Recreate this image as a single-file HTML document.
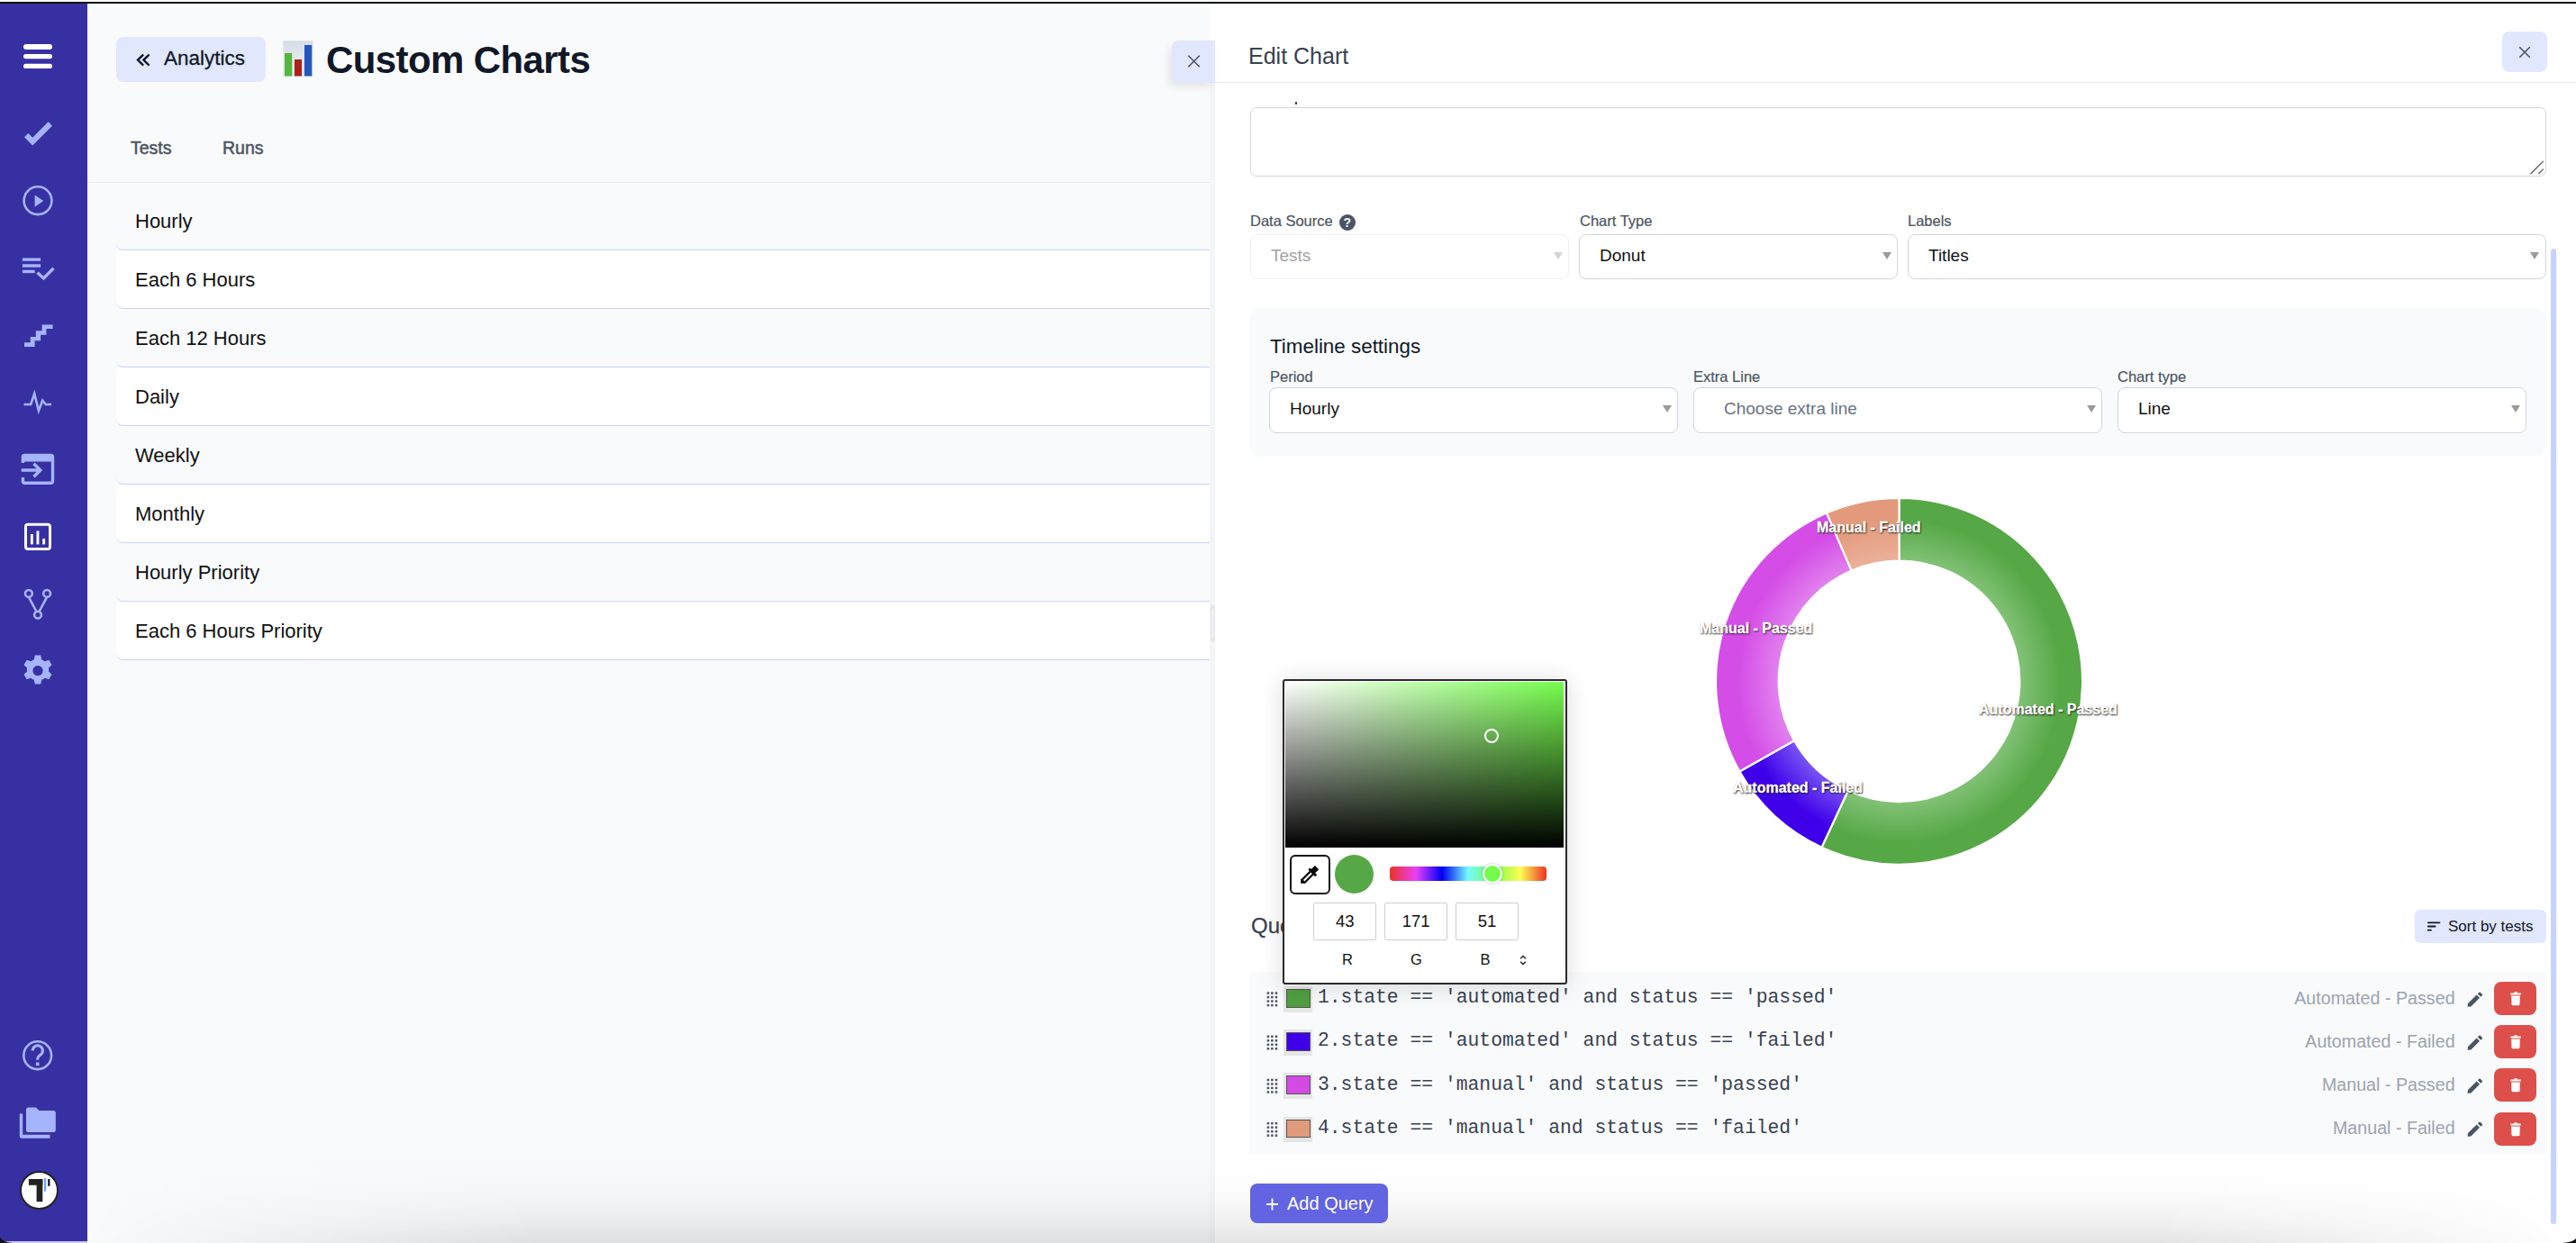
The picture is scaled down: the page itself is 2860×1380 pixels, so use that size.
<!DOCTYPE html>
<html><head><meta charset="utf-8">
<style>
*{box-sizing:border-box;margin:0;padding:0}
html,body{width:2860px;height:1380px;overflow:hidden;background:#fff;font-family:"Liberation Sans",sans-serif}
.a{position:absolute}
.t{position:absolute;white-space:nowrap;line-height:1}
#topbar{left:0;top:2px;width:2860px;height:2px;background:#111}
#side{left:0;top:4px;width:97px;height:1376px;background:#3730a3}
#main{left:97px;top:4px;width:1246px;height:1376px;background:#f9fafb}
.item{position:absolute;left:129px;width:1214px;height:65px;border-bottom:1px solid #c7d2fe;border-radius:8px 0 0 8px}
.item span{position:absolute;left:21px;font-size:22px;line-height:1;color:#111;top:22px}
.lbl{position:absolute;font-size:16.5px;line-height:1;color:#4b5563;white-space:nowrap;-webkit-text-stroke:0.2px #4b5563}
.sel{position:absolute;height:50px;border:1px solid #d1d5db;border-radius:8px;background:#fff}
.sel span{position:absolute;left:22px;top:12.5px;font-size:19px;line-height:1;color:#111;white-space:nowrap}
.arr{position:absolute;width:0;height:0;border-left:5px solid transparent;border-right:5px solid transparent;border-top:8px solid #9a9a9a}
.dl{font-size:16px;font-weight:bold;color:#fff;text-shadow:0.5px 0.5px 1.5px rgba(0,0,0,.75),1px 1px 2px rgba(0,0,0,.5);-webkit-text-stroke:0.3px #fff}
.mono{font-family:"Liberation Mono",monospace;font-size:21.35px;color:#374151}
.ql{font-size:19.7px;color:#9ca3af}
.pin{top:1002.4px;width:69.6px;height:41.8px;border:1px solid #cfcfcf;border-radius:2px;background:#fff}
.pin span{position:absolute;left:0;right:0;top:10.5px;text-align:center;font-size:18.5px;line-height:1;color:#111}
.pl{top:1057px;width:40px;text-align:center;font-size:16.5px;color:#111}
</style></head><body>
<div class="a" id="topbar"></div>
<div class="a" id="side"></div>
<div class="a" id="main"></div>

<!-- left header -->
<div class="a" style="left:129px;top:41px;width:166px;height:50px;background:#e0e7ff;border-radius:8px"></div>
<div class="t" style="left:182px;top:54px;font-size:22.5px;color:#111827;-webkit-text-stroke:0.3px #111827">Analytics</div>
<div class="t" style="left:362px;top:46px;font-size:42px;font-weight:bold;color:#111827;letter-spacing:-0.6px">Custom Charts</div>
<div class="t" style="left:145px;top:155px;font-size:19.5px;color:#4b5563;-webkit-text-stroke:0.5px #4b5563">Tests</div>
<div class="t" style="left:247px;top:155px;font-size:19.5px;color:#4b5563;-webkit-text-stroke:0.5px #4b5563">Runs</div>
<div class="a" style="left:97px;top:202px;width:1246px;height:1px;background:#e5e7eb"></div>

<!-- list -->
<div class="item" style="top:213px;background:#f9fafb"><span>Hourly</span></div>
<div class="item" style="top:278px;background:#fff"><span>Each 6 Hours</span></div>
<div class="item" style="top:343px;background:#f9fafb"><span>Each 12 Hours</span></div>
<div class="item" style="top:408px;background:#fff"><span>Daily</span></div>
<div class="item" style="top:473px;background:#f9fafb"><span>Weekly</span></div>
<div class="item" style="top:538px;background:#fff"><span>Monthly</span></div>
<div class="item" style="top:603px;background:#f9fafb"><span>Hourly Priority</span></div>
<div class="item" style="top:668px;background:#fff"><span>Each 6 Hours Priority</span></div>

<!-- right panel -->
<div class="a" style="left:1343px;top:4px;width:1517px;height:87px;background:#fff"></div>
<div class="a" style="left:1343px;top:91px;width:6px;height:1289px;background:#f4f5f6"></div>
<div class="a" style="left:1349px;top:91px;width:1511px;height:1289px;background:#fff"></div>
<div class="a" style="left:1343px;top:91px;width:1517px;height:1px;background:#e5e7eb"></div>
<!-- bottom shadow -->
<div class="a" style="left:97px;top:1290px;width:2763px;height:90px;pointer-events:none;background:linear-gradient(to bottom,rgba(0,0,0,0),rgba(0,0,0,0.012) 35%,rgba(0,0,0,0.05) 70%,rgba(0,0,0,0.105));-webkit-mask-image:linear-gradient(to right,transparent 0,#000 500px,#000 2300px,transparent 2763px)"></div>

<div class="a" style="left:1301px;top:45px;width:48px;height:46px;background:#e0e7ff;border-radius:8px 0 0 8px;box-shadow:-4px 6px 10px rgba(0,0,0,0.08)"></div>
<div class="t" style="left:1386px;top:50px;font-size:25px;color:#374151">Edit Chart</div>
<div class="a" style="left:2778px;top:35px;width:50px;height:45px;background:#e0e7ff;border-radius:8px"></div>

<div class="a" style="left:1388px;top:119px;width:1439px;height:77px;border:1px solid #d1d5db;border-radius:7px"></div>

<div class="lbl" style="left:1388px;top:237px">Data Source</div>
<div class="lbl" style="left:1754px;top:237px">Chart Type</div>
<div class="lbl" style="left:2118px;top:237px">Labels</div>
<div class="sel" style="left:1388px;top:260px;width:354px;border-color:#eceef1"><span style="color:#a3a3a3">Tests</span></div>
<div class="sel" style="left:1753px;top:260px;width:354px"><span>Donut</span></div>
<div class="sel" style="left:2118px;top:260px;width:709px"><span>Titles</span></div>

<div class="a" style="left:1388px;top:342px;width:1439px;height:165px;background:#f9fafb;border-radius:12px"></div>
<div class="t" style="left:1410px;top:374px;font-size:22.4px;color:#111827">Timeline settings</div>
<div class="lbl" style="left:1410px;top:410px">Period</div>
<div class="lbl" style="left:1880px;top:410px">Extra Line</div>
<div class="lbl" style="left:2351px;top:410px">Chart type</div>
<div class="sel" style="left:1409px;top:430px;width:454px;height:51px"><span>Hourly</span></div>
<div class="sel" style="left:1880px;top:430px;width:454px;height:51px"><span style="left:33px;color:#6b7280">Choose extra line</span></div>
<div class="sel" style="left:2351px;top:430px;width:454px;height:51px"><span>Line</span></div>

<!-- donut -->
<svg class="a" style="left:1880px;top:530px" width="480" height="460" viewBox="1880 530 480 460">
<defs>
<radialGradient id="rgg" gradientUnits="userSpaceOnUse" cx="2108.5" cy="756.3" r="203.5"><stop offset="0.64" stop-color="#86c47b"/><stop offset="0.88" stop-color="#56a846"/><stop offset="1" stop-color="#56a846"/></radialGradient>
<radialGradient id="rgb" gradientUnits="userSpaceOnUse" cx="2108.5" cy="756.3" r="203.5"><stop offset="0.64" stop-color="#7d5cf5"/><stop offset="0.88" stop-color="#3f00e9"/><stop offset="1" stop-color="#3f00e9"/></radialGradient>
<radialGradient id="rgm" gradientUnits="userSpaceOnUse" cx="2108.5" cy="756.3" r="203.5"><stop offset="0.64" stop-color="#e286ef"/><stop offset="0.88" stop-color="#d44de6"/><stop offset="1" stop-color="#d44de6"/></radialGradient>
<radialGradient id="rgs" gradientUnits="userSpaceOnUse" cx="2108.5" cy="756.3" r="203.5"><stop offset="0.64" stop-color="#ecb29c"/><stop offset="0.88" stop-color="#e39a7c"/><stop offset="1" stop-color="#e39a7c"/></radialGradient>
</defs>
<path d="M2108.50 552.80 A203.5 203.5 0 1 1 2022.50 940.73 L2051.95 877.56 A133.8 133.8 0 1 0 2108.50 622.50Z" fill="url(#rgg)" stroke="#fff" stroke-width="2.2" stroke-linejoin="round"/>
<path d="M2022.50 940.73 A203.5 203.5 0 0 1 1931.38 856.51 L1992.05 822.19 A133.8 133.8 0 0 0 2051.95 877.56Z" fill="url(#rgb)" stroke="#fff" stroke-width="2.2" stroke-linejoin="round"/>
<path d="M1931.38 856.51 A203.5 203.5 0 0 1 2028.01 569.40 L2055.58 633.41 A133.8 133.8 0 0 0 1992.05 822.19Z" fill="url(#rgm)" stroke="#fff" stroke-width="2.2" stroke-linejoin="round"/>
<path d="M2028.01 569.40 A203.5 203.5 0 0 1 2108.50 552.80 L2108.50 622.50 A133.8 133.8 0 0 0 2055.58 633.41Z" fill="url(#rgs)" stroke="#fff" stroke-width="2.2" stroke-linejoin="round"/>
</svg>
<div class="t dl" style="left:2017px;top:578px">Manual - Failed</div>
<div class="t dl" style="left:1887px;top:689.5px">Manual - Passed</div>
<div class="t dl" style="left:2197px;top:780px">Automated - Passed</div>
<div class="t dl" style="left:1924px;top:866.5px">Automated - Failed</div>

<!-- queries -->
<div class="t" style="left:1389px;top:1016px;font-size:24px;color:#374151;-webkit-text-stroke:0.25px #374151">Queries</div>
<div class="a" style="left:2681px;top:1010px;width:146px;height:37px;background:#e0e7ff;border-radius:6px"></div>
<div class="t" style="left:2718px;top:1020px;font-size:17px;color:#111827">Sort by tests</div>
<div class="a" style="left:1388px;top:1079px;width:1439px;height:202px;background:#f9fafb"></div>

<svg class="a" style="left:0;top:0;overflow:visible" width="1" height="1"><g fill="#4b5563"><rect x="1406.7" y="1101.3" width="2.5" height="2.5"/><rect x="1411.1" y="1101.3" width="2.5" height="2.5"/><rect x="1415.7" y="1101.3" width="2.5" height="2.5"/><rect x="1406.7" y="1105.8" width="2.5" height="2.5"/><rect x="1411.1" y="1105.8" width="2.5" height="2.5"/><rect x="1415.7" y="1105.8" width="2.5" height="2.5"/><rect x="1406.7" y="1110.3" width="2.5" height="2.5"/><rect x="1411.1" y="1110.3" width="2.5" height="2.5"/><rect x="1415.7" y="1110.3" width="2.5" height="2.5"/><rect x="1406.7" y="1114.8" width="2.5" height="2.5"/><rect x="1411.1" y="1114.8" width="2.5" height="2.5"/><rect x="1415.7" y="1114.8" width="2.5" height="2.5"/></g></svg>
<div class="a" style="left:1425px;top:1095.0px;width:31.5px;height:28.6px;background:#e5e5e5"></div>
<div class="a" style="left:1428px;top:1098.0px;width:26.7px;height:20.8px;background:#4f9f40;border:1px solid #555"></div>
<div class="t mono" style="left:1463px;top:1097.2px">1.state == &#39;automated&#39; and status == &#39;passed&#39;</div>
<div class="t ql" style="right:134.4px;top:1098.5px">Automated - Passed</div>
<svg class="a" style="left:2737px;top:1099.5px" width="20" height="20" viewBox="0 0 24 24"><path d="M3 21.2 L3.6 16.9 L15.2 5.3 L19.3 9.4 L7.7 21 Z M16.6 3.9 L18.4 2.1 a1.2 1.2 0 0 1 1.7 0 L22.5 4.5 a1.2 1.2 0 0 1 0 1.7 L20.7 8 Z" fill="#4b5563"/></svg>
<div class="a" style="left:2769px;top:1090.0px;width:47px;height:37px;background:#dd4f4b;border-radius:8px"></div>
<svg class="a" style="left:2785px;top:1100.0px" width="16" height="17" viewBox="0 0 16 17"><path d="M2.4 2.6 h3.6 l0.8-1.3 h2.6 l0.8 1.3 h3.6 v1.8 h-11.4z M3.2 5.5 h9.6 l-0.3 9.6 a1.4 1.4 0 0 1-1.4 1.2 h-6.2 a1.4 1.4 0 0 1-1.4-1.2z" fill="#fff"/></svg>
<svg class="a" style="left:0;top:0;overflow:visible" width="1" height="1"><g fill="#4b5563"><rect x="1406.7" y="1149.5" width="2.5" height="2.5"/><rect x="1411.1" y="1149.5" width="2.5" height="2.5"/><rect x="1415.7" y="1149.5" width="2.5" height="2.5"/><rect x="1406.7" y="1154.0" width="2.5" height="2.5"/><rect x="1411.1" y="1154.0" width="2.5" height="2.5"/><rect x="1415.7" y="1154.0" width="2.5" height="2.5"/><rect x="1406.7" y="1158.5" width="2.5" height="2.5"/><rect x="1411.1" y="1158.5" width="2.5" height="2.5"/><rect x="1415.7" y="1158.5" width="2.5" height="2.5"/><rect x="1406.7" y="1163.0" width="2.5" height="2.5"/><rect x="1411.1" y="1163.0" width="2.5" height="2.5"/><rect x="1415.7" y="1163.0" width="2.5" height="2.5"/></g></svg>
<div class="a" style="left:1425px;top:1143.2px;width:31.5px;height:28.6px;background:#e5e5e5"></div>
<div class="a" style="left:1428px;top:1146.2px;width:26.7px;height:20.8px;background:#3f00e8;border:1px solid #555"></div>
<div class="t mono" style="left:1463px;top:1145.4px">2.state == &#39;automated&#39; and status == &#39;failed&#39;</div>
<div class="t ql" style="right:134.4px;top:1146.7px">Automated - Failed</div>
<svg class="a" style="left:2737px;top:1147.7px" width="20" height="20" viewBox="0 0 24 24"><path d="M3 21.2 L3.6 16.9 L15.2 5.3 L19.3 9.4 L7.7 21 Z M16.6 3.9 L18.4 2.1 a1.2 1.2 0 0 1 1.7 0 L22.5 4.5 a1.2 1.2 0 0 1 0 1.7 L20.7 8 Z" fill="#4b5563"/></svg>
<div class="a" style="left:2769px;top:1138.2px;width:47px;height:37px;background:#dd4f4b;border-radius:8px"></div>
<svg class="a" style="left:2785px;top:1148.2px" width="16" height="17" viewBox="0 0 16 17"><path d="M2.4 2.6 h3.6 l0.8-1.3 h2.6 l0.8 1.3 h3.6 v1.8 h-11.4z M3.2 5.5 h9.6 l-0.3 9.6 a1.4 1.4 0 0 1-1.4 1.2 h-6.2 a1.4 1.4 0 0 1-1.4-1.2z" fill="#fff"/></svg>
<svg class="a" style="left:0;top:0;overflow:visible" width="1" height="1"><g fill="#4b5563"><rect x="1406.7" y="1197.7" width="2.5" height="2.5"/><rect x="1411.1" y="1197.7" width="2.5" height="2.5"/><rect x="1415.7" y="1197.7" width="2.5" height="2.5"/><rect x="1406.7" y="1202.2" width="2.5" height="2.5"/><rect x="1411.1" y="1202.2" width="2.5" height="2.5"/><rect x="1415.7" y="1202.2" width="2.5" height="2.5"/><rect x="1406.7" y="1206.7" width="2.5" height="2.5"/><rect x="1411.1" y="1206.7" width="2.5" height="2.5"/><rect x="1415.7" y="1206.7" width="2.5" height="2.5"/><rect x="1406.7" y="1211.2" width="2.5" height="2.5"/><rect x="1411.1" y="1211.2" width="2.5" height="2.5"/><rect x="1415.7" y="1211.2" width="2.5" height="2.5"/></g></svg>
<div class="a" style="left:1425px;top:1191.4px;width:31.5px;height:28.6px;background:#e5e5e5"></div>
<div class="a" style="left:1428px;top:1194.4px;width:26.7px;height:20.8px;background:#d34ae2;border:1px solid #555"></div>
<div class="t mono" style="left:1463px;top:1193.6px">3.state == &#39;manual&#39; and status == &#39;passed&#39;</div>
<div class="t ql" style="right:134.4px;top:1194.9px">Manual - Passed</div>
<svg class="a" style="left:2737px;top:1195.9px" width="20" height="20" viewBox="0 0 24 24"><path d="M3 21.2 L3.6 16.9 L15.2 5.3 L19.3 9.4 L7.7 21 Z M16.6 3.9 L18.4 2.1 a1.2 1.2 0 0 1 1.7 0 L22.5 4.5 a1.2 1.2 0 0 1 0 1.7 L20.7 8 Z" fill="#4b5563"/></svg>
<div class="a" style="left:2769px;top:1186.4px;width:47px;height:37px;background:#dd4f4b;border-radius:8px"></div>
<svg class="a" style="left:2785px;top:1196.4px" width="16" height="17" viewBox="0 0 16 17"><path d="M2.4 2.6 h3.6 l0.8-1.3 h2.6 l0.8 1.3 h3.6 v1.8 h-11.4z M3.2 5.5 h9.6 l-0.3 9.6 a1.4 1.4 0 0 1-1.4 1.2 h-6.2 a1.4 1.4 0 0 1-1.4-1.2z" fill="#fff"/></svg>
<svg class="a" style="left:0;top:0;overflow:visible" width="1" height="1"><g fill="#4b5563"><rect x="1406.7" y="1245.9" width="2.5" height="2.5"/><rect x="1411.1" y="1245.9" width="2.5" height="2.5"/><rect x="1415.7" y="1245.9" width="2.5" height="2.5"/><rect x="1406.7" y="1250.4" width="2.5" height="2.5"/><rect x="1411.1" y="1250.4" width="2.5" height="2.5"/><rect x="1415.7" y="1250.4" width="2.5" height="2.5"/><rect x="1406.7" y="1254.9" width="2.5" height="2.5"/><rect x="1411.1" y="1254.9" width="2.5" height="2.5"/><rect x="1415.7" y="1254.9" width="2.5" height="2.5"/><rect x="1406.7" y="1259.4" width="2.5" height="2.5"/><rect x="1411.1" y="1259.4" width="2.5" height="2.5"/><rect x="1415.7" y="1259.4" width="2.5" height="2.5"/></g></svg>
<div class="a" style="left:1425px;top:1239.6px;width:31.5px;height:28.6px;background:#e5e5e5"></div>
<div class="a" style="left:1428px;top:1242.6px;width:26.7px;height:20.8px;background:#e09a7c;border:1px solid #555"></div>
<div class="t mono" style="left:1463px;top:1241.8px">4.state == &#39;manual&#39; and status == &#39;failed&#39;</div>
<div class="t ql" style="right:134.4px;top:1243.1px">Manual - Failed</div>
<svg class="a" style="left:2737px;top:1244.1px" width="20" height="20" viewBox="0 0 24 24"><path d="M3 21.2 L3.6 16.9 L15.2 5.3 L19.3 9.4 L7.7 21 Z M16.6 3.9 L18.4 2.1 a1.2 1.2 0 0 1 1.7 0 L22.5 4.5 a1.2 1.2 0 0 1 0 1.7 L20.7 8 Z" fill="#4b5563"/></svg>
<div class="a" style="left:2769px;top:1234.6px;width:47px;height:37px;background:#dd4f4b;border-radius:8px"></div>
<svg class="a" style="left:2785px;top:1244.6px" width="16" height="17" viewBox="0 0 16 17"><path d="M2.4 2.6 h3.6 l0.8-1.3 h2.6 l0.8 1.3 h3.6 v1.8 h-11.4z M3.2 5.5 h9.6 l-0.3 9.6 a1.4 1.4 0 0 1-1.4 1.2 h-6.2 a1.4 1.4 0 0 1-1.4-1.2z" fill="#fff"/></svg>
<svg class="a" style="left:2694px;top:1022px" width="17" height="13" viewBox="0 0 17 13"><g fill="#111827"><rect x="1" y="1.4" width="14.4" height="1.8" rx="0.9"/><rect x="1" y="5.6" width="9.6" height="1.8" rx="0.9"/><rect x="1" y="9.8" width="4.8" height="1.8" rx="0.9"/></g></svg>
<div class="a" style="left:1388px;top:1314px;width:153px;height:44px;background:#6264e2;border-radius:8px"></div>
<div class="t" style="left:1429px;top:1326px;font-size:20px;color:#fff">Add Query</div>
<svg class="a" style="left:1403px;top:1327px" width="20" height="20" viewBox="0 0 20 20"><path d="M9.5 3.5 v13 M3 10 h13" stroke="#fff" stroke-width="1.8"/></svg>

<div class="a" style="left:2832px;top:276px;width:6px;height:1083px;background:#c7d2fe;border-radius:3px"></div>


<!-- resizer handle -->
<div class="a" style="left:1343.5px;top:671px;width:5.5px;height:41.5px;border-radius:3px;background:#e5e7eb"></div>
<div class="a" style="left:1345.5px;top:676px;width:1.5px;height:32px;background:#f9fafb"></div>
<!-- window corners -->
<div class="a" style="left:0;top:1378px;width:97px;height:2px;background:#c9c8e8"></div>
<svg class="a" style="left:0;top:1360px" width="20" height="20" viewBox="0 1360 20 20"><path d="M0 1373.5 Q3 1379 14 1380 L0 1380Z" fill="#111"/></svg>
<svg class="a" style="left:2840px;top:1360px" width="20" height="20" viewBox="2840 1360 20 20"><path d="M2860 1375 Q2857 1379 2845 1380 L2860 1380Z" fill="#111"/></svg>
<!-- color picker -->
<div class="a" style="left:1424.2px;top:754.2px;width:315.4px;height:339.2px;background:#fff;border:2px solid #2a2a2a;border-radius:3px;box-shadow:0 2px 26px rgba(0,0,0,0.15)"></div>
<div class="a" style="left:1427px;top:757px;width:309px;height:184px;border-radius:0 2px 0 0;background:linear-gradient(to top,#000,rgba(0,0,0,0)),linear-gradient(to right,#fff,#75fb4c)"></div>
<div class="a" style="left:1647.6px;top:808.7px;width:16px;height:16px;border:2px solid #fff;border-radius:50%"></div>
<div class="a" style="left:1432.3px;top:948.5px;width:45px;height:44px;border:2.6px solid #111;border-radius:6px"></div>
<svg class="a" style="left:1425px;top:940px" width="120" height="60" viewBox="1425 940 120 60">
 <path d="M1446.6 978.8 L1457.6 967.8" stroke="#000" stroke-width="6.4"/>
 <path d="M1447.6 977.8 L1456.4 969" stroke="#fff" stroke-width="2.1"/>
 <polygon points="1444.2,975.6 1444.2,980.8 1449.4,980.8 1446.8,978.2" fill="#000"/>
 <path d="M1453.4 964.4 L1461.2 972.2" stroke="#000" stroke-width="2.8"/>
 <polygon points="1459.9,960.9 1464.2,965.2 1459.6,969.8 1455.3,965.5" fill="#000"/>
</svg>
<div class="a" style="left:1481.9px;top:949.4px;width:42.8px;height:42.8px;border-radius:50%;background:#56a846"></div>
<div class="a" style="left:1542.6px;top:961.8px;width:174.4px;height:16.2px;border-radius:4px;background:linear-gradient(to right,#ea3323 0%,#ea3ff7 16.67%,#0000f5 33.33%,#75fbfd 50%,#75fb4c 66.67%,#fffe54 83.33%,#ea3323 100%)"></div>
<div class="a" style="left:1646px;top:959.2px;width:22px;height:22px;border-radius:50%;background:#75fb4c;border:2.2px solid #fff;box-shadow:0 0 2px rgba(0,0,0,.35)"></div>
<div class="a pin" style="left:1458.4px"><span>43</span></div>
<div class="a pin" style="left:1537.4px"><span>171</span></div>
<div class="a pin" style="left:1616.2px"><span>51</span></div>
<div class="t pl" style="left:1476px">R</div>
<div class="t pl" style="left:1552.5px">G</div>
<div class="t pl" style="left:1629px">B</div>
<svg class="a" style="left:1684px;top:1058px" width="14" height="16" viewBox="0 0 14 16">
 <path d="M4.2 6.2 L7 3.4 L9.8 6.2 M4.2 9.8 L7 12.6 L9.8 9.8" fill="none" stroke="#111" stroke-width="1.3"/>
</svg>



<!-- sidebar icons -->
<svg class="a" style="left:0;top:0" width="97" height="1380" viewBox="0 0 97 1380">
 <g fill="#fff">
  <rect x="26" y="49" width="32" height="6" rx="3"/>
  <rect x="26" y="60" width="32" height="5.2" rx="2.6"/>
  <rect x="26" y="70.8" width="32" height="5.2" rx="2.6"/>
 </g>
 <g fill="none" stroke="#a5b4fc">
  <polyline points="29.2,150.1 36.2,157.1 55.8,137.5" stroke-width="6.2" stroke-linejoin="miter"/>
  <circle cx="42" cy="222.7" r="15.4" stroke-width="2.6"/>
  <polyline points="41.5,302.7 48.5,309 59.5,297.8" stroke-width="3.4"/>
  <polyline points="26.6,449 34.2,449 38.2,437 42.9,456 47.2,444.6 50.7,449 57,449" stroke-width="2.6" stroke-linejoin="miter"/>
  <circle cx="42" cy="682.6" r="3.9" stroke-width="2.6"/>
  <circle cx="31.9" cy="658.9" r="3.9" stroke-width="2.6"/>
  <circle cx="52.1" cy="658.9" r="3.9" stroke-width="2.6"/>
  <path d="M31.9 662.8 L40.5 679 M52.1 662.8 L43.5 679" stroke-width="2.6"/>
  <circle cx="41.7" cy="1171.7" r="15.4" stroke-width="2.6"/>
  <path d="M36.2 1166.5 a5.6 5.6 0 1 1 8.6 4.7 c-1.9 1.2-3.1 2.2-3.1 4.6 v1" stroke-width="3"/>
 </g>
 <g fill="#a5b4fc">
  <polygon points="38.6,216.5 48.3,223.1 38.6,229.8"/>
  <rect x="24.9" y="286.5" width="20.2" height="3.3"/>
  <rect x="24.9" y="293.3" width="20.2" height="3.4"/>
  <rect x="24.9" y="299.8" width="13.7" height="3.4"/>
  <polygon points="27,385 27,380.2 33.8,380.2 33.8,373.9 39.8,373.9 39.8,367.3 46.6,367.3 46.6,360.6 58.6,360.6 58.6,365 51.4,365 51.4,371.7 45.1,371.7 45.1,378.2 38.6,378.2 38.6,385"/>
  <rect x="39.9" y="1179.5" width="3.6" height="3.6"/>
  <path d="M29 1232 a2.5 2.5 0 0 1 2.5-2.5 h8.5 l3.5 3.5 h15.8 a2.5 2.5 0 0 1 2.5 2.5 v18.9 a2.5 2.5 0 0 1-2.5 2.5 h-27.8 a2.5 2.5 0 0 1-2.5-2.5z"/>
  <path d="M21.8 1236.6 h3.4 v23.2 h30.3 v3.9 h-31.2 a2.5 2.5 0 0 1-2.5-2.5z"/>
 </g>
 <!-- import icon -->
 <g fill="none" stroke="#a5b4fc" stroke-width="3.4">
  <path d="M25.4 514 V507.5 a2 2 0 0 1 2-2 h29.1 a2 2 0 0 1 2 2 v26.8 a2 2 0 0 1-2 2 h-29.1 a2 2 0 0 1-2-2 V530"/>
  <path d="M23.7 522 H44.5 M37.5 514.8 L44.8 522 L37.5 529.2"/>
 </g>
 <rect x="25.4" y="505.5" width="33" height="7" fill="#a5b4fc" rx="2"/>
 <!-- chart box active -->
 <rect x="28.5" y="582.2" width="27" height="27.3" rx="2.5" fill="none" stroke="#fff" stroke-width="3"/>
 <g fill="#fff">
  <rect x="33.9" y="593" width="2.9" height="11.4"/>
  <rect x="40.5" y="589.4" width="2.9" height="15"/>
  <rect x="47.2" y="598" width="2.9" height="6.4"/>
 </g>
 <!-- gear -->
 <g transform="translate(42 744.6)" fill="#a5b4fc">
  <path d="M-3.2 -17 h6.4 l1 4.6 a13 13 0 0 1 3.6 2.1 l4.5-1.5 3.2 5.5 -3.5 3.1 a13 13 0 0 1 0 4.2 l3.5 3.1 -3.2 5.5 -4.5-1.5 a13 13 0 0 1-3.6 2.1 l-1 4.6 h-6.4 l-1-4.6 a13 13 0 0 1-3.6-2.1 l-4.5 1.5 -3.2-5.5 3.5-3.1 a13 13 0 0 1 0-4.2 l-3.5-3.1 3.2-5.5 4.5 1.5 a13 13 0 0 1 3.6-2.1z M0 -5.6 a5.6 5.6 0 1 0 0.01 0z" fill-rule="evenodd"/>
 </g>
 <!-- logo -->
 <circle cx="43.5" cy="1321.5" r="20.5" fill="#fff" stroke="#222" stroke-width="2"/>
 <rect x="31.9" y="1309" width="15.4" height="6.8" fill="#222"/>
 <rect x="40.6" y="1309" width="6.7" height="25.2" fill="#222"/>
 <rect x="48.9" y="1308" width="2.3" height="14.6" fill="#6aa0ff"/>
 <rect x="53.1" y="1309" width="2.4" height="7.8" fill="#222"/>
</svg>

<!-- header icons -->
<svg class="a" style="left:145px;top:55px" width="30" height="24" viewBox="145 55 30 24">
 <path d="M159.2 60.6 L153 66.6 L159.2 72.6 M165.6 60.6 L159.4 66.6 L165.6 72.6" fill="none" stroke="#111827" stroke-width="2.4"/>
</svg>
<svg class="a" style="left:314px;top:45px" width="34" height="40" viewBox="314 45 34 40">
 <defs><linearGradient id="eg" x1="0" y1="0" x2="0" y2="1"><stop offset="0" stop-color="#d6dde5"/><stop offset="0.5" stop-color="#e4e9ee"/><stop offset="1" stop-color="#dde2e8"/></linearGradient></defs>
 <rect x="314.3" y="45.2" width="33.3" height="39.6" fill="url(#eg)"/>
 <rect x="316" y="59" width="8.2" height="25.5" fill="#55b63e"/>
 <rect x="327" y="66" width="8" height="18.5" fill="#aa2319"/>
 <rect x="338" y="50" width="8.2" height="34.5" fill="#2456bd"/>
</svg>
<svg class="a" style="left:1310px;top:55px" width="30" height="30" viewBox="1310 55 30 30">
 <path d="M1319.3 61.8 L1331.8 74.2 M1331.8 61.8 L1319.3 74.2" stroke="#4b5563" stroke-width="1.6"/>
</svg>
<svg class="a" style="left:2790px;top:45px" width="26" height="26" viewBox="2790 45 26 26">
 <path d="M2797.3 52.3 L2808.8 63.8 M2808.8 52.3 L2797.3 63.8" stroke="#4b5563" stroke-width="1.6"/>
</svg>
<div class="a" style="left:1437.5px;top:113px;width:2px;height:3px;background:#374151"></div>
<svg class="a" style="left:2800px;top:170px" width="30" height="30" viewBox="2800 170 30 30">
 <path d="M2809.6 193 L2823.8 178.8 M2818.4 193 L2823.8 187.6" stroke="#555" stroke-width="1.2"/>
</svg>
<!-- ? icon -->
<div class="a" style="left:1486.8px;top:237.6px;width:18px;height:18px;border-radius:50%;background:#4b5563"></div>
<div class="t" style="left:1486.8px;top:240px;width:18px;text-align:center;font-size:14px;font-weight:bold;color:#fff">?</div>
<!-- select arrows -->
<div class="arr" style="left:1725px;top:280px;border-top-color:#d1d5db"></div>
<div class="arr" style="left:2090px;top:280px"></div>
<div class="arr" style="left:2809px;top:280px"></div>
<div class="arr" style="left:1846px;top:450px"></div>
<div class="arr" style="left:2317px;top:450px"></div>
<div class="arr" style="left:2788px;top:450px"></div>

</body></html>
